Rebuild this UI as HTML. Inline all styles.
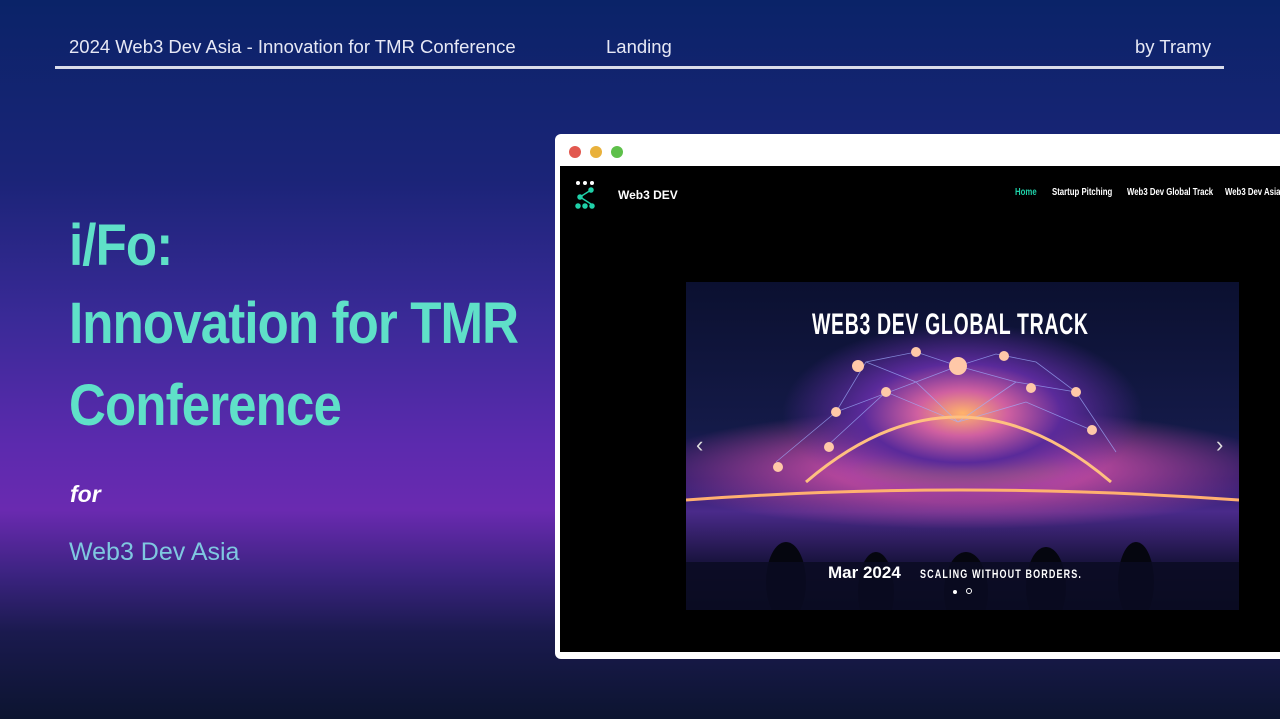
<!DOCTYPE html>
<html><head><meta charset="utf-8"><style>
*{margin:0;padding:0;box-sizing:border-box}
body{width:1280px;height:719px;overflow:hidden;position:relative;font-family:"Liberation Sans",sans-serif;
background:linear-gradient(180deg,#0a2368 0%,#1b2478 25%,#3b2a98 45%,#5c2aae 62%,#6a2ab0 71%,#3b2380 80%,#1a1a4e 88%,#0c1430 100%);}
.hdr{position:absolute;top:36px;font-size:18.5px;color:#e6e8f5;white-space:nowrap}
.line{position:absolute;left:55px;top:66px;width:1169px;height:3px;background:#d9dcea}
.big{position:absolute;left:69px;color:#5fe0c8;font-weight:bold;font-size:58px;letter-spacing:-1px;white-space:nowrap;transform:scaleX(0.88);transform-origin:left top}
.frame{position:absolute;left:555px;top:134px;width:740px;height:525px;background:#fff;border-radius:6px}
.dot{position:absolute;top:146px;width:12px;height:12px;border-radius:50%}
.scr{position:absolute;left:560px;top:166px;width:720px;height:486px;background:#000}
.nav{position:absolute;top:187px;font-size:10px;font-weight:bold;color:#fff;white-space:nowrap;transform:scaleX(0.78);transform-origin:left top}
.img{position:absolute;left:686px;top:282px;width:553px;height:328px;overflow:hidden;
background:radial-gradient(ellipse 180px 90px at 50% 40%,#ffb36a 0%,#d060a0 25%,#5a2a9a 55%,rgba(20,20,60,0) 100%),
radial-gradient(ellipse 320px 60px at 50% 57%,#ff9a60 0%,#c04aa0 35%,rgba(30,20,80,0) 100%),
linear-gradient(180deg,#0b1030 0%,#141a48 45%,#2a1a6a 60%,#4a2a8a 70%,#1a1440 85%,#0a0c22 100%)}
</style></head><body>
<div class="hdr" style="left:69px">2024 Web3 Dev Asia - Innovation for TMR Conference</div>
<div class="hdr" style="left:606px">Landing</div>
<div class="hdr" style="left:1135px">by Tramy</div>
<div class="line"></div>
<div class="big" style="top:212px">i/Fo:</div>
<div class="big" style="top:290px">Innovation for TMR</div>
<div class="big" style="top:372px">Conference</div>
<div style="position:absolute;left:70px;top:481px;color:#fff;font-weight:bold;font-style:italic;font-size:23px">for</div>
<div style="position:absolute;left:69px;top:538px;color:#7fc8e0;font-size:25px">Web3 Dev Asia</div>
<div class="frame"></div>
<div class="dot" style="left:569px;background:#e2584f"></div>
<div class="dot" style="left:590px;background:#e9b13b"></div>
<div class="dot" style="left:611px;background:#5ec04a"></div>
<div class="scr"></div>
<svg style="position:absolute;left:575px;top:180px" width="22" height="30"><g fill="#fff"><circle cx="3" cy="3" r="2"/><circle cx="10" cy="3" r="2"/><circle cx="17" cy="3" r="2"/></g><g fill="#1fd0a8" stroke="#1fd0a8" stroke-width="1.5"><path d="M16 10 L5 17 L16 24" fill="none"/><circle cx="16" cy="10" r="2"/><circle cx="5" cy="17" r="2"/><circle cx="3" cy="26" r="2"/><circle cx="10" cy="26" r="2"/><circle cx="17" cy="26" r="2"/></g></svg>
<div style="position:absolute;left:618px;top:188px;color:#fff;font-weight:bold;font-size:12px">Web3 DEV</div>
<div class="nav" style="left:1015px;color:#1fd0a8">Home</div>
<div class="nav" style="left:1052px">Startup Pitching</div>
<div class="nav" style="left:1127px">Web3 Dev Global Track</div>
<div class="nav" style="left:1225px">Web3 Dev Asia</div>
<div class="img">
<svg width="553" height="328" style="position:absolute;left:0;top:0">
<g stroke="#9fb0ff" stroke-width="0.8" opacity="0.7" fill="none">
<path d="M90 180 L150 130 L180 80 L230 70 L272 84 L310 72 L350 80 L390 110 L430 170 M150 130 L230 100 L272 84 L330 100 L390 110 M180 80 L230 100 L272 140 L330 100 M140 165 L200 110 L272 140 L340 120 L410 150"/>
</g>
<path d="M120 200 Q272 70 425 200" stroke="#ffc080" stroke-width="3" fill="none"/>
<path d="M0 218 Q272 198 553 218" stroke="#ffb070" stroke-width="3" fill="none"/>
<g fill="#ffc8a8"><circle cx="272" cy="84" r="9"/><circle cx="172" cy="84" r="6"/><circle cx="230" cy="70" r="5"/><circle cx="318" cy="74" r="5"/><circle cx="150" cy="130" r="5"/><circle cx="390" cy="110" r="5"/><circle cx="345" cy="106" r="5"/><circle cx="200" cy="110" r="5"/><circle cx="143" cy="165" r="5"/><circle cx="406" cy="148" r="5"/><circle cx="92" cy="185" r="5"/></g>
<g fill="#05060f"><ellipse cx="100" cy="300" rx="20" ry="40"/><ellipse cx="190" cy="310" rx="18" ry="40"/><ellipse cx="280" cy="310" rx="22" ry="40"/><ellipse cx="360" cy="305" rx="20" ry="40"/><ellipse cx="450" cy="300" rx="18" ry="40"/></g>
<rect x="0" y="280" width="553" height="48" fill="#0a0c22" opacity="0.85"/>
</svg>
<div style="position:absolute;left:126px;top:26px;color:#fff;font-weight:bold;font-size:30px;letter-spacing:1px;white-space:nowrap;transform:scaleX(0.65);transform-origin:left top">WEB3 DEV GLOBAL TRACK</div>
<div style="position:absolute;left:142px;top:281px;color:#fff;font-weight:bold;font-size:17px">Mar 2024</div>
<div style="position:absolute;left:234px;top:285px;color:#fff;font-weight:bold;font-size:12px;letter-spacing:1.5px;white-space:nowrap;transform:scaleX(0.75);transform-origin:left top">SCALING WITHOUT BORDERS.</div>
<div style="position:absolute;left:267px;top:308px;width:4px;height:4px;border-radius:50%;background:#fff"></div>
<div style="position:absolute;left:280px;top:306px;width:6px;height:6px;border-radius:50%;border:1px solid #fff"></div>
<div style="position:absolute;left:10px;top:150px;color:#ddd;font-size:22px">‹</div>
<div style="position:absolute;left:530px;top:150px;color:#ddd;font-size:22px">›</div>
</div>
</body></html>
